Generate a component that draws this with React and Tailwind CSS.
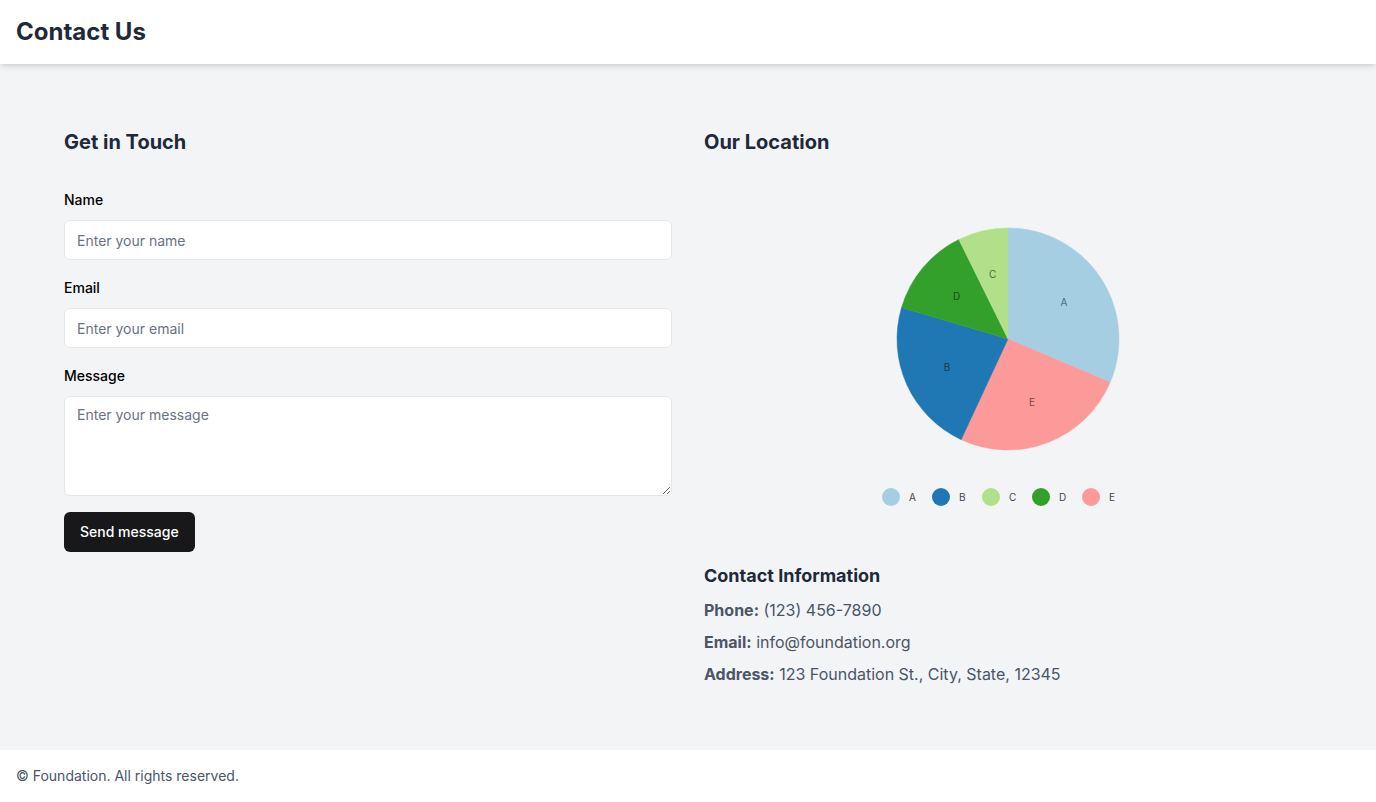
import React from "react";

const slices = [
  { name: "A", value: 430, color: "#a6cee3", text: "#4b6a7a" },
  { name: "E", value: 350, color: "#fb9a99", text: "#7a4545" },
  { name: "B", value: 310, color: "#1f78b4", text: "#163a55" },
  { name: "D", value: 180, color: "#33a02c", text: "#1d4a1a" },
  { name: "C", value: 100, color: "#b2df8a", text: "#4d6a3a" },
];

const legend = [
  { name: "A", color: "#a6cee3" },
  { name: "B", color: "#1f78b4" },
  { name: "C", color: "#b2df8a" },
  { name: "D", color: "#33a02c" },
  { name: "E", color: "#fb9a99" },
];

const PieChart = () => {
  const cx = 304;
  const cy = 151;
  const r = 111;
  const total = slices.reduce((s, d) => s + d.value, 0);
  let angle = 0;

  const point = (deg, rad) => {
    const a = (deg * Math.PI) / 180;
    return [cx + rad * Math.sin(a), cy - rad * Math.cos(a)];
  };

  return (
    <svg width="608" height="342" viewBox="0 0 608 342" className="block">
      {slices.map((s) => {
        const start = angle;
        const sweep = (s.value / total) * 360;
        angle += sweep;
        const [x1, y1] = point(start, r);
        const [x2, y2] = point(start + sweep, r);
        const [lx, ly] = point(start + sweep / 2, 67);
        const large = sweep > 180 ? 1 : 0;
        return (
          <g key={s.name}>
            <path
              d={`M${cx},${cy} L${x1},${y1} A${r},${r} 0 ${large} 1 ${x2},${y2} Z`}
              fill={s.color}
              stroke={s.color}
              strokeWidth="0.5"
            />
            <text
              x={lx}
              y={ly}
              textAnchor="middle"
              dominantBaseline="central"
              fontSize="10"
              fill={s.text}
              fontFamily="Inter, sans-serif"
            >
              {s.name}
            </text>
          </g>
        );
      })}
      {legend.map((l, i) => (
        <g key={l.name}>
          <circle cx={187 + i * 50} cy={309} r={9} fill={l.color} />
          <text
            x={205 + i * 50}
            y={309}
            dominantBaseline="central"
            fontSize="10"
            fill="#444"
            fontFamily="Inter, sans-serif"
          >
            {l.name}
          </text>
        </g>
      ))}
    </svg>
  );
};

const Field = ({ label, placeholder, textarea }) => (
  <div className="flex flex-col">
    <label className="text-sm leading-6 font-medium text-black mb-2">{label}</label>
    {textarea ? (
      <textarea
        placeholder={placeholder}
        className="h-[100px] w-full rounded-md border border-gray-200 bg-white px-3 py-2 text-sm leading-5 placeholder:text-gray-500 outline-none"
      />
    ) : (
      <input
        type="text"
        placeholder={placeholder}
        className="h-10 w-full rounded-md border border-gray-200 bg-white px-3 text-sm placeholder:text-gray-500 outline-none"
      />
    )}
  </div>
);

const App = () => {
  return (
    <div className="min-h-screen flex flex-col bg-gray-100 font-['Inter',sans-serif]">
      <header className="bg-white shadow-md px-4 py-4 relative z-10">
        <h1 className="text-2xl leading-8 font-bold text-gray-800">Contact Us</h1>
      </header>

      <main className="p-16 grid grid-cols-2 gap-8">
        <section>
          <h2 className="text-xl leading-7 font-bold text-gray-800 mb-8">Get in Touch</h2>
          <form className="flex flex-col gap-4" onSubmit={(e) => e.preventDefault()}>
            <Field label="Name" placeholder="Enter your name" />
            <Field label="Email" placeholder="Enter your email" />
            <Field label="Message" placeholder="Enter your message" textarea />
            <div>
              <button
                type="submit"
                className="h-10 px-4 rounded-md bg-[#18181b] text-white text-sm font-medium"
              >
                Send message
              </button>
            </div>
          </form>
        </section>

        <section>
          <h2 className="text-xl leading-7 font-bold text-gray-800 mb-8">Our Location</h2>
          <PieChart />
          <div className="mt-8">
            <h3 className="text-lg leading-7 font-bold text-gray-800 mb-2">Contact Information</h3>
            <div className="flex flex-col gap-2 text-base text-gray-600">
              <p>
                <span className="font-bold">Phone:</span> (123) 456-7890
              </p>
              <p>
                <span className="font-bold">Email:</span> info@foundation.org
              </p>
              <p>
                <span className="font-bold">Address:</span> 123 Foundation St., City, State, 12345
              </p>
            </div>
          </div>
        </section>
      </main>

      <footer className="bg-white p-4 mt-auto">
        <p className="text-sm text-gray-600">© Foundation. All rights reserved.</p>
      </footer>
    </div>
  );
};

export default App;
